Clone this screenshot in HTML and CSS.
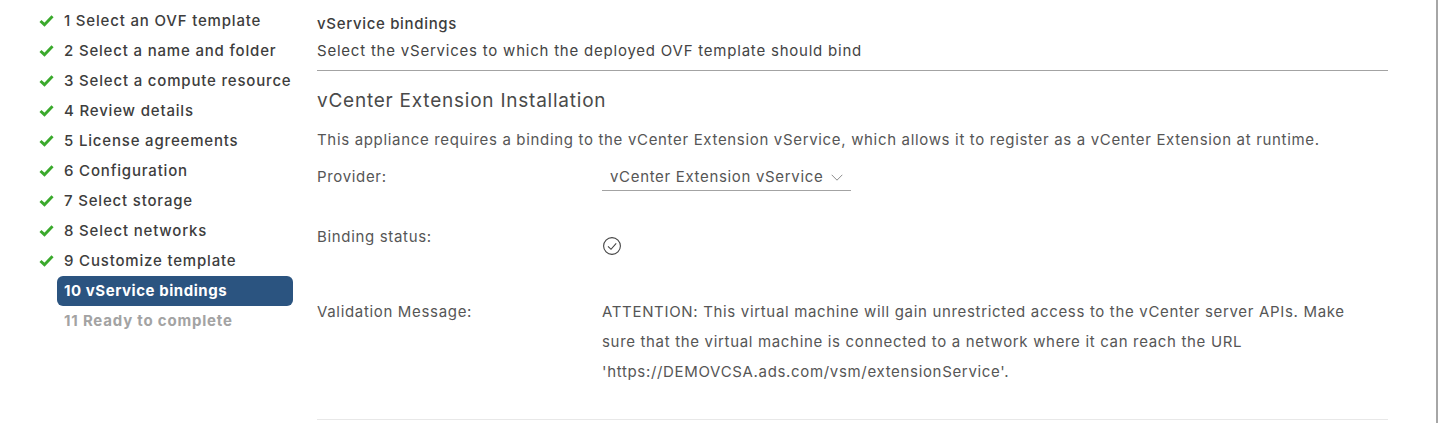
FILE: index.html
```html
<!DOCTYPE html>
<html lang="en">
<head>
  <meta charset="UTF-8" />
  <title>Deploy OVF Template</title>
  <link rel="stylesheet" href="styles.css">
</head>
<body>
  <div class="wizard">
    <nav class="steps">
      <div class="step done"><svg class="tick" viewBox="0 0 16 14"><path d="M1.5 7.5l4.3 4L14.5 2.5"/></svg>1 Select an OVF template</div>
      <div class="step done"><svg class="tick" viewBox="0 0 16 14"><path d="M1.5 7.5l4.3 4L14.5 2.5"/></svg>2 Select a name and folder</div>
      <div class="step done"><svg class="tick" viewBox="0 0 16 14"><path d="M1.5 7.5l4.3 4L14.5 2.5"/></svg>3 Select a compute resource</div>
      <div class="step done"><svg class="tick" viewBox="0 0 16 14"><path d="M1.5 7.5l4.3 4L14.5 2.5"/></svg>4 Review details</div>
      <div class="step done"><svg class="tick" viewBox="0 0 16 14"><path d="M1.5 7.5l4.3 4L14.5 2.5"/></svg>5 License agreements</div>
      <div class="step done"><svg class="tick" viewBox="0 0 16 14"><path d="M1.5 7.5l4.3 4L14.5 2.5"/></svg>6 Configuration</div>
      <div class="step done"><svg class="tick" viewBox="0 0 16 14"><path d="M1.5 7.5l4.3 4L14.5 2.5"/></svg>7 Select storage</div>
      <div class="step done"><svg class="tick" viewBox="0 0 16 14"><path d="M1.5 7.5l4.3 4L14.5 2.5"/></svg>8 Select networks</div>
      <div class="step done"><svg class="tick" viewBox="0 0 16 14"><path d="M1.5 7.5l4.3 4L14.5 2.5"/></svg>9 Customize template</div>
      <div class="step active">10 vService bindings</div>
      <div class="step todo">11 Ready to complete</div>
    </nav>

    <main class="content">
      <header class="page-head">
        <div class="page-title">vService bindings</div>
        <div class="page-sub">Select the vServices to which the deployed OVF template should bind</div>
      </header>

      <section class="binding">
        <h3>vCenter Extension Installation</h3>
        <p class="desc">This appliance requires a binding to the vCenter Extension vService, which allows it to register as a vCenter Extension at runtime.</p>

        <div class="row row-provider">
          <div class="label">Provider:</div>
          <div class="select">
            <span>vCenter Extension vService</span>
            <svg class="chevron" viewBox="0 0 12 7"><path d="M.7 .8L6 6.2 11.3 .8"/></svg>
          </div>
        </div>

        <div class="row row-status">
          <div class="label">Binding status:</div>
          <svg class="status-icon" viewBox="0 0 20 20"><circle cx="10" cy="10" r="8.4"/><path d="M6 10.4l3 2.9 5.2-6"/></svg>
        </div>

        <div class="row row-message">
          <div class="label">Validation Message:</div>
          <div class="message">ATTENTION: This virtual machine will gain unrestricted access to the vCenter server APIs. Make sure that the virtual machine is connected to a network where it can reach the URL 'https://DEMOVCSA.ads.com/vsm/extensionService'.</div>
        </div>
      </section>
    </main>
  </div>
</body>
</html>
```

FILE: styles.css
```css
html, body {
  margin: 0;
  height: 423px;
  overflow: hidden;
}

body {
  font-family: "Inter", "Liberation Sans", sans-serif;
  font-size: 15px;
  letter-spacing: 0.67px;
  color: #565656;
  background: #fff;
}

.wizard {
  display: flex;
  height: 423px;
  box-sizing: border-box;
  border-right: 2px solid #a6a6a6;
}

.steps {
  width: 236px;
  margin-left: 57px;
  padding-top: 6px;
  flex-shrink: 0;
}

.step {
  position: relative;
  height: 30px;
  line-height: 29px;
  padding-left: 7px;
  font-weight: 500;
  letter-spacing: 0.82px;
  color: #3d3d3d;
  white-space: nowrap;
}

.tick {
  position: absolute;
  left: -18px;
  top: 8px;
  width: 15px;
  height: 13px;
  fill: none;
  stroke: #3aa92c;
  stroke-width: 3.2;
}

.step.active {
  background: #2b5480;
  color: #fff;
  font-weight: 700;
  letter-spacing: 0.55px;
  border-radius: 6px;
}

.step.todo {
  color: #a3a3a3;
  font-weight: 700;
  letter-spacing: 0.8px;
}

.content {
  width: 1071px;
  margin-left: 24px;
  padding-top: 14px;
}

.page-head {
  border-bottom: 1px solid #a3a3a3;
  padding-bottom: 9px;
}

.page-title {
  line-height: 20px;
  font-weight: 500;
  letter-spacing: 0.68px;
  color: #3d3d3d;
}

.page-sub {
  margin-top: 7px;
  line-height: 20px;
  letter-spacing: 0.78px;
  color: #444;
}

.binding {
  height: 349px;
  box-sizing: border-box;
  padding-top: 17px;
  border-bottom: 1px solid #e8e8e8;
}

h3 {
  margin: 0;
  font-size: 19px;
  line-height: 26px;
  font-weight: 400;
  letter-spacing: 0.77px;
  color: #4a4a4a;
}

.desc {
  margin: 15px 0 0;
  line-height: 22px;
  white-space: nowrap;
}

.row {
  display: flex;
}

.label {
  width: 285px;
  flex-shrink: 0;
  line-height: 22px;
}

.row-provider {
  margin-top: 15px;
  line-height: 22px;
}

.select {
  display: flex;
  align-items: center;
  gap: 8px;
  width: 249px;
  box-sizing: border-box;
  padding: 0 0 2px 8px;
  border-bottom: 1px solid #a3a3a3;
  white-space: nowrap;
}

.chevron {
  width: 12px;
  height: 7px;
  fill: none;
  stroke: #8c8c8c;
  stroke-width: 1;
}

.row-status {
  margin-top: 35px;
}

.status-icon {
  width: 20px;
  height: 20px;
  margin-top: 10px;
  fill: none;
  stroke: #444;
  stroke-width: 1.1;
}

.row-message {
  margin-top: 41px;
}

.row-message .label, .message {
  line-height: 30px;
}

.message {
  width: 750px;
}
```
